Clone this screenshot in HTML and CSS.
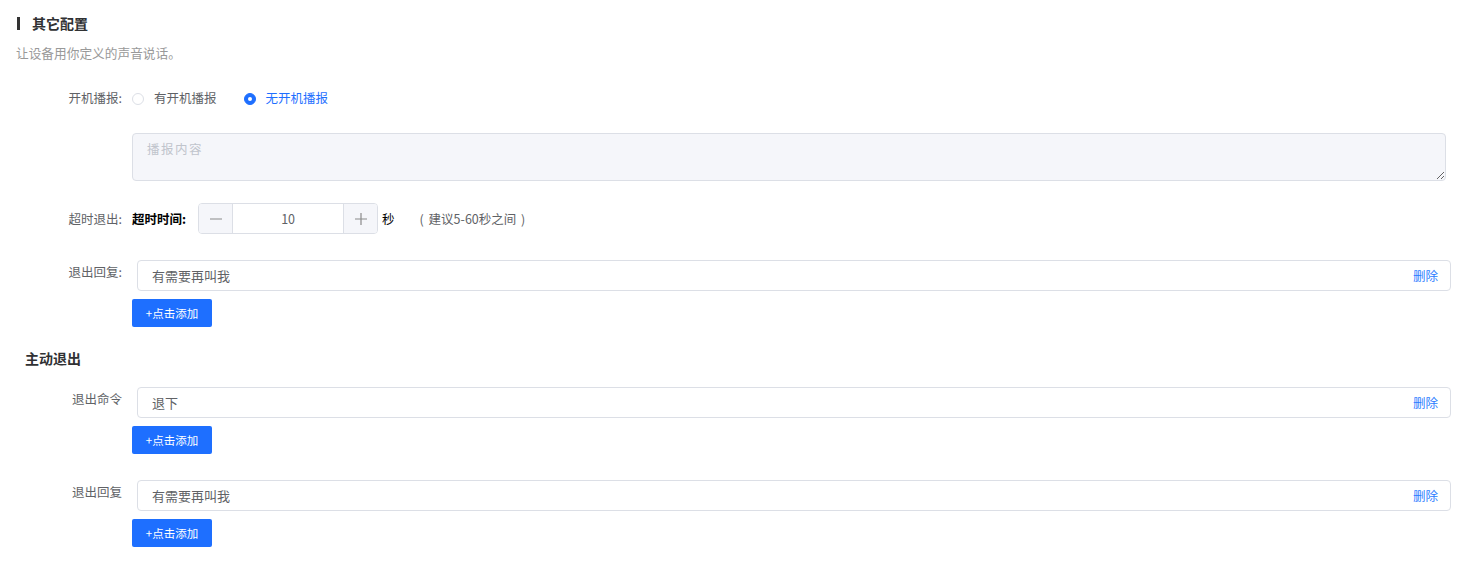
FILE: index.html
```html
<!DOCTYPE html>
<html lang="zh-CN">
<head>
  <meta charset="UTF-8">
  <meta name="viewport" content="width=device-width, initial-scale=1.0">
  <title>其它配置</title>
  <link rel="stylesheet" href="styles.css">
</head>
<body>
  <div class="page">
    <h2 class="section-title">其它配置</h2>
    <p class="section-desc">让设备用你定义的声音说话。</p>

    <div class="form-item radio-row">
      <label class="item-label">开机播报:</label>
      <div class="item-content">
        <label class="radio">
          <span class="radio-dot"></span>
          <span>有开机播报</span>
        </label>
        <label class="radio checked">
          <span class="radio-dot"></span>
          <span>无开机播报</span>
        </label>
      </div>
    </div>

    <div class="form-item textarea-row">
      <div class="item-label"></div>
      <div class="item-content">
        <textarea class="textarea" placeholder="播报内容"></textarea>
      </div>
    </div>

    <div class="form-item stepper-row">
      <label class="item-label">超时退出:</label>
      <div class="item-content">
        <span class="inner-label">超时时间:</span>
        <div class="stepper">
          <span class="stepper-btn">
            <svg width="12" height="12" viewBox="0 0 12 12"><line x1="0" y1="6" x2="12" y2="6" stroke="#8a8a8a" stroke-width="1.2"/></svg>
          </span>
          <input class="stepper-input" type="text" value="10">
          <span class="stepper-btn plus">
            <svg width="12" height="12" viewBox="0 0 12 12"><line x1="0" y1="6" x2="12" y2="6" stroke="#8a8a8a" stroke-width="1.2"/><line x1="6" y1="0" x2="6" y2="12" stroke="#8a8a8a" stroke-width="1.2"/></svg>
          </span>
        </div>
        <span class="unit">秒</span>
        <span class="hint">( 建议5-60秒之间 )</span>
      </div>
    </div>

    <div class="form-item input-row">
      <label class="item-label">退出回复:</label>
      <div class="item-content">
        <div class="text-field">
          <span>有需要再叫我</span>
          <a class="delete-link">删除</a>
        </div>
      </div>
    </div>
    <div class="form-item add-row">
      <div class="item-label"></div>
      <div class="item-content">
        <button class="btn-add" type="button">+点击添加</button>
      </div>
    </div>

    <h3 class="sub-title">主动退出</h3>

    <div class="form-item input-row">
      <label class="item-label">退出命令</label>
      <div class="item-content">
        <div class="text-field">
          <span>退下</span>
          <a class="delete-link">删除</a>
        </div>
      </div>
    </div>
    <div class="form-item add-row">
      <div class="item-label"></div>
      <div class="item-content">
        <button class="btn-add" type="button">+点击添加</button>
      </div>
    </div>

    <div class="form-item input-row">
      <label class="item-label">退出回复</label>
      <div class="item-content">
        <div class="text-field">
          <span>有需要再叫我</span>
          <a class="delete-link">删除</a>
        </div>
      </div>
    </div>
    <div class="form-item add-row">
      <div class="item-label"></div>
      <div class="item-content">
        <button class="btn-add" type="button">+点击添加</button>
      </div>
    </div>
  </div>
</body>
</html>
```

FILE: styles.css
```css
body {
  margin: 0;
  font-family: "Noto Sans CJK SC", "Noto Sans", sans-serif;
  font-size: 12.5px;
  color: #606266;
  background-color: #fff;
}

.page {
  padding: 14px 0 0 0;
}

.section-title {
  margin: 3px 0 14px 17px;
  padding-left: 12px;
  border-left: 3px solid #333;
  font-size: 14px;
  line-height: 13px;
  height: 13px;
  color: #303133;
  font-weight: bold;
}

.section-desc {
  margin: 0 0 26px 16px;
  font-size: 12.7px;
  line-height: 18px;
  color: #999;
}

.form-item {
  display: flex;
}

.item-label {
  width: 122px;
  flex-shrink: 0;
  text-align: right;
  line-height: 20px;
  color: #606266;
}

.item-content {
  margin-left: 10px;
  display: flex;
  align-items: center;
}

/* 单选 */
.radio-row {
  align-items: center;
  margin-bottom: 25px;
}

.radio {
  display: flex;
  align-items: center;
  margin-right: 27px;
  line-height: 20px;
  color: #606266;
}

.radio-dot {
  width: 10px;
  height: 10px;
  border: 1px solid #dcdfe6;
  border-radius: 50%;
  margin-right: 10px;
  margin-top: 1px;
  background: #fff;
}

.radio.checked {
  color: #1e6fff;
}

.radio.checked .radio-dot {
  background: #1e6fff;
  border-color: #1e6fff;
  position: relative;
}

.radio.checked .radio-dot::after {
  content: "";
  position: absolute;
  left: 3px;
  top: 3px;
  width: 4px;
  height: 4px;
  border-radius: 50%;
  background: #fff;
}

/* 文本框 */
.textarea-row {
  margin-bottom: 22px;
}

.textarea {
  width: 1314px;
  height: 48px;
  box-sizing: border-box;
  padding: 5px 14px;
  border: 1px solid #dcdfe6;
  border-radius: 4px;
  background: #f5f6fa;
  font-family: inherit;
  font-size: 12.5px;
  letter-spacing: 1.5px;
  color: #606266;
  outline: none;
}

.textarea::placeholder {
  color: #c0c4cc;
}

/* 计数器 */
.stepper-row {
  align-items: center;
  margin-bottom: 26px;
}

.inner-label {
  color: #000;
  font-weight: bold;
  margin-right: 12px;
}

.stepper {
  display: flex;
  height: 31px;
  box-sizing: border-box;
  border: 1px solid #dcdfe6;
  border-radius: 4px;
  overflow: hidden;
}

.stepper-btn {
  width: 33px;
  display: flex;
  align-items: center;
  justify-content: center;
  background: #f5f6fa;
  border-right: 1px solid #dcdfe6;
}

.stepper-btn.plus {
  border-right: none;
  border-left: 1px solid #dcdfe6;
}

.stepper-input {
  width: 110px;
  border: none;
  outline: none;
  text-align: center;
  font-family: inherit;
  font-size: 12.5px;
  color: #606266;
  padding: 0;
}

.unit {
  color: #000;
  margin-left: 4px;
}

.hint {
  margin-left: 25px;
  color: #606266;
  word-spacing: 2px;
}

/* 输入项 */
.input-row {
  margin-bottom: 8px;
}

.input-row .item-label {
  padding-top: 2px;
}

.text-field {
  margin-left: 5px;
  width: 1314px;
  height: 31px;
  box-sizing: border-box;
  border: 1px solid #dcdfe6;
  border-radius: 4px;
  display: flex;
  align-items: center;
  justify-content: space-between;
  padding: 0 12px 0 14px;
  color: #606266;
  font-size: 13px;
}

.delete-link {
  color: #2a7cff;
  font-size: 12.5px;
  cursor: pointer;
}

.add-row {
  margin-bottom: 26px;
}

.btn-add {
  width: 80px;
  height: 28px;
  border: none;
  border-radius: 2px;
  background: #1e6fff;
  color: #fff;
  font-family: inherit;
  font-size: 11.5px;
  cursor: pointer;
  padding: 0;
}

.sub-title {
  margin: -5px 0 19px 25px;
  font-size: 14px;
  line-height: 20px;
  color: #303133;
  font-weight: bold;
}
```
